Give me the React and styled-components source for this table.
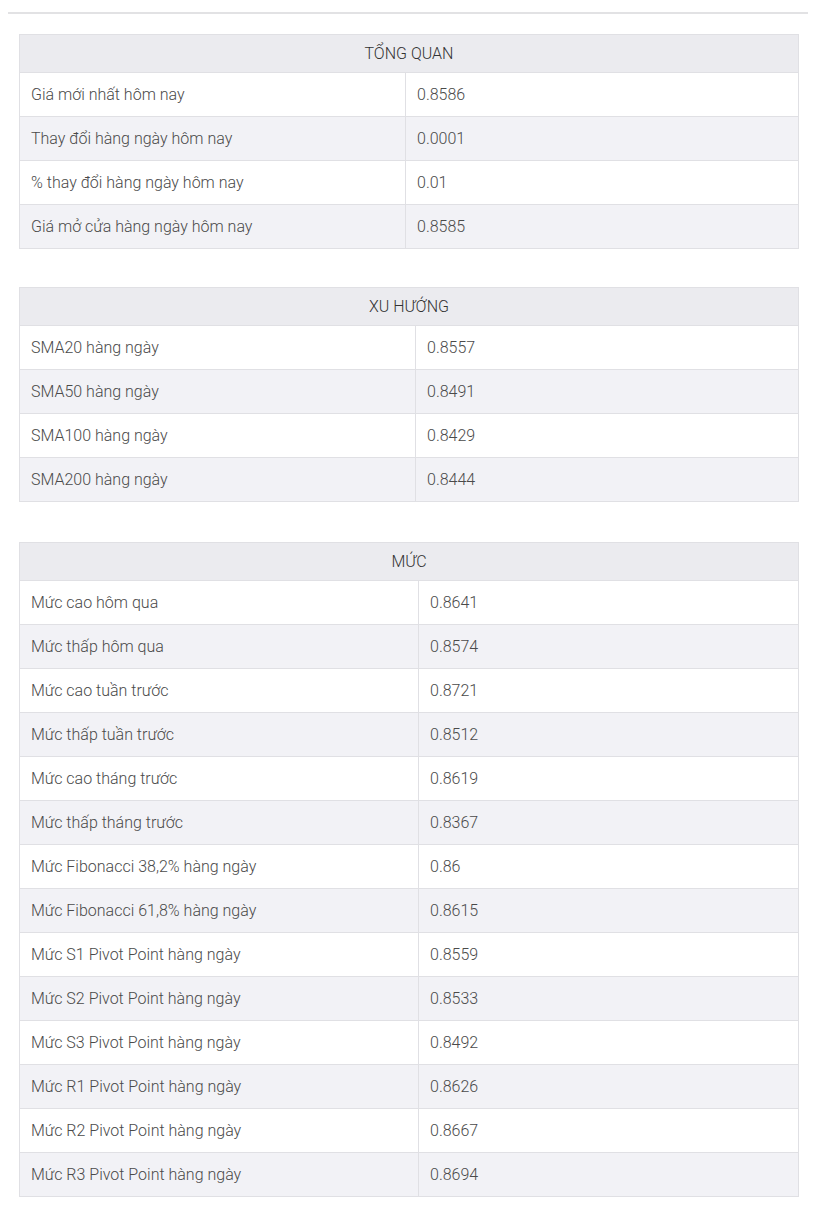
import React from 'react';
import styled, {createGlobalStyle} from 'styled-components';

const GlobalStyle = createGlobalStyle`
    body{
        margin: 0;
        background: #fff;
        font-family: Roboto, "Liberation Sans", sans-serif;
    }
`;

const sections = [
    {
        title: 'TỔNG QUAN',
        labelWidth: 386,
        rows: [
            ['Giá mới nhất hôm nay', '0.8586'],
            ['Thay đổi hàng ngày hôm nay', '0.0001'],
            ['% thay đổi hàng ngày hôm nay', '0.01'],
            ['Giá mở cửa hàng ngày hôm nay', '0.8585'],
        ],
    },
    {
        title: 'XU HƯỚNG',
        labelWidth: 396,
        rows: [
            ['SMA20 hàng ngày', '0.8557'],
            ['SMA50 hàng ngày', '0.8491'],
            ['SMA100 hàng ngày', '0.8429'],
            ['SMA200 hàng ngày', '0.8444'],
        ],
    },
    {
        title: 'MỨC',
        labelWidth: 399,
        rows: [
            ['Mức cao hôm qua', '0.8641'],
            ['Mức thấp hôm qua', '0.8574'],
            ['Mức cao tuần trước', '0.8721'],
            ['Mức thấp tuần trước', '0.8512'],
            ['Mức cao tháng trước', '0.8619'],
            ['Mức thấp tháng trước', '0.8367'],
            ['Mức Fibonacci 38,2% hàng ngày', '0.86'],
            ['Mức Fibonacci 61,8% hàng ngày', '0.8615'],
            ['Mức S1 Pivot Point hàng ngày', '0.8559'],
            ['Mức S2 Pivot Point hàng ngày', '0.8533'],
            ['Mức S3 Pivot Point hàng ngày', '0.8492'],
            ['Mức R1 Pivot Point hàng ngày', '0.8626'],
            ['Mức R2 Pivot Point hàng ngày', '0.8667'],
            ['Mức R3 Pivot Point hàng ngày', '0.8694'],
        ],
    },
];

const App = () => {
    return (
        <Page>
            <GlobalStyle />
            <Rule />
            <Stack>
                {sections.map((s) => (
                    <Table key={s.title}>
                        <colgroup>
                            <col style={{width: s.labelWidth}} />
                            <col />
                        </colgroup>
                        <thead>
                            <tr>
                                <Head colSpan={2}>{s.title}</Head>
                            </tr>
                        </thead>
                        <tbody>
                            {s.rows.map(([label, value], i) => (
                                <Row key={label} $odd={i % 2 === 1}>
                                    <Cell>{label}</Cell>
                                    <Cell>{value}</Cell>
                                </Row>
                            ))}
                        </tbody>
                    </Table>
                ))}
            </Stack>
        </Page>
    );
};

const Page = styled.div`
    width: 822px;
    padding-top: 12px;
    padding-bottom: 32px;
`;

const Rule = styled.div`
    margin-left: 8px;
    width: 800px;
    height: 2px;
    background: #e2e2e4;
`;

const Stack = styled.div`
    display: flex;
    flex-direction: column;
    gap: 38px;
    padding: 20px 0 0 19px;
`;

const Table = styled.table`
    width: 780px;
    border-collapse: collapse;
    table-layout: fixed;
    color: #4a4a4a;
    font-size: 16px;
    font-weight: 300;
    &:last-child{
        margin-top: 2px;
    }
`;

const Head = styled.th`
    height: 37px;
    padding: 0;
    background: #ebebef;
    border: 1px solid #e0e0e4;
    text-align: center;
    font-weight: 300;
    font-size: 16px;
    color: #333;
`;

const Row = styled.tr`
    background: ${(p) => (p.$odd ? '#f2f2f6' : '#fff')};
`;

const Cell = styled.td`
    height: 44px;
    padding: 0 11px;
    box-sizing: border-box;
    border: 1px solid #e0e0e4;
    vertical-align: middle;
`;

export default App;
